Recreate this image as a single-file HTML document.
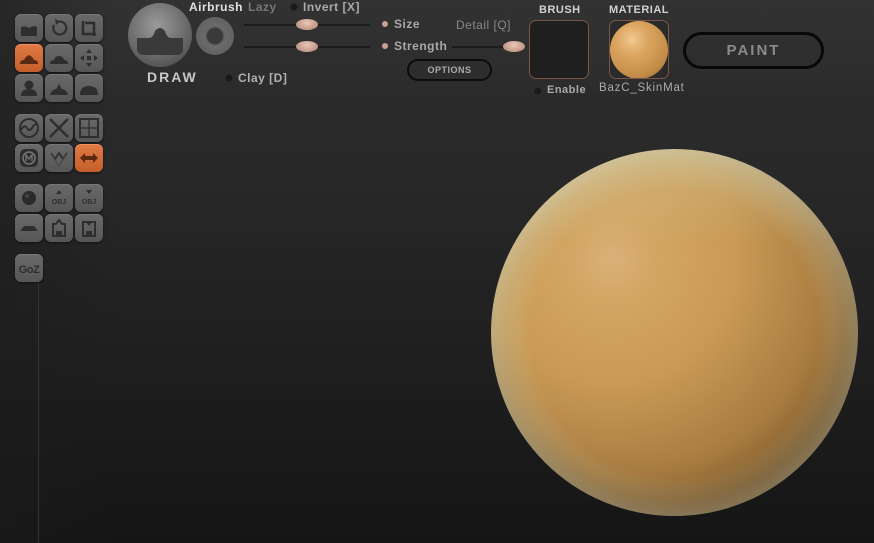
<!DOCTYPE html>
<html><head><meta charset="utf-8"><style>
*{margin:0;padding:0;box-sizing:border-box}
body{width:874px;height:543px;overflow:hidden;position:relative;font-family:"Liberation Sans","DejaVu Sans",sans-serif;
background:linear-gradient(180deg,#2d2d2d 0%,#292929 30%,#1f1f1f 65%,#151515 100%);}
.top{position:absolute;left:0;top:0;width:874px;height:96px;background:linear-gradient(180deg,#323232,#2d2d2d 80%,rgba(42,42,42,0));}
.left{position:absolute;left:0;top:0;width:118px;height:543px;background:linear-gradient(90deg,rgba(28,28,28,0.5),rgba(40,40,40,0));}
.vline{position:absolute;left:38px;top:282px;width:1px;height:261px;background:#333}
.b{position:absolute;width:28px;height:28px;border-radius:6px;background:linear-gradient(180deg,#6a6a6a,#565656);box-shadow:0 1px 2px #111, inset 0 1px 0 #777;}
.b.o{background:linear-gradient(180deg,#e07a45,#c45f2c);box-shadow:0 1px 2px #111, inset 0 1px 0 #f09060}
.b svg{position:absolute;left:0;top:0}
.t{position:absolute;color:#bdbdbd;font-size:12px;font-weight:bold;letter-spacing:0.5px;white-space:nowrap}
.dot{position:absolute;width:8px;height:8px;border-radius:50%;background:#1a1a1a;box-shadow:inset 0 0 1px #555}
.pd{position:absolute;width:6px;height:6px;border-radius:50%;background:#c8a090}
.knob{position:absolute;width:22px;height:11px;border-radius:50%;background:radial-gradient(ellipse at 50% 35%,#e8c8b8,#b08070)}
.line{position:absolute;height:2px;background:#1c1c1c}
</style></head><body>
<div class="top"></div>
<div class="left"></div>
<div class="vline"></div>

<div class="b" style="left:15px;top:14px"><svg width="28" height="28"><path d="M6 13 Q10 11 14 14 Q18 11 22 13 L22 22 L6 22Z" fill="#2e2e2e"/></svg></div>
<div class="b" style="left:45px;top:14px"><svg width="28" height="28"><path d="M9 11 A6.5 6.5 0 1 0 14 7.5" fill="none" stroke="#2e2e2e" stroke-width="2.2"/><path d="M10 5 L15 7.5 L11 11Z" fill="#2e2e2e"/></svg></div>
<div class="b" style="left:75px;top:14px"><svg width="28" height="28"><path d="M8 7 V20 H21 M10 9 H19 V22" fill="none" stroke="#2e2e2e" stroke-width="2.5"/></svg></div>
<div class="b o" style="left:15px;top:44px"><svg width="28" height="28"><path d="M5 20 Q5 16 9 16 Q11 12 14 11 Q17 12 19 16 Q23 16 23 20 Z" fill="#5a2a12"/></svg></div>
<div class="b" style="left:45px;top:44px"><svg width="28" height="28"><path d="M5 20 Q5 16 9 16 Q10 12 14 12 Q18 12 19 16 Q23 16 23 20 Z" fill="#2e2e2e"/></svg></div>
<div class="b" style="left:75px;top:44px"><svg width="28" height="28"><path d="M14 5 L17 9 H11Z M14 23 L17 19 H11Z M5 14 L9 11 V17Z M23 14 L19 11 V17Z" fill="#2e2e2e"/><rect x="12" y="12" width="4" height="4" fill="#2e2e2e"/></svg></div>
<div class="b" style="left:15px;top:74px"><svg width="28" height="28"><circle cx="14" cy="11" r="4.5" fill="#2e2e2e"/><path d="M6 22 Q6 15 14 15 Q22 15 22 22Z" fill="#2e2e2e"/></svg></div>
<div class="b" style="left:45px;top:74px"><svg width="28" height="28"><path d="M5 21 Q6 16 11 15 Q13 13 14 9 Q15 13 17 15 Q22 16 23 21Z" fill="#2e2e2e"/></svg></div>
<div class="b" style="left:75px;top:74px"><svg width="28" height="28"><path d="M5 21 Q5 12 14 12 Q23 12 23 21Z" fill="#2e2e2e"/></svg></div>

<div class="b" style="left:15px;top:114px"><svg width="28" height="28"><circle cx="14" cy="14" r="9" fill="none" stroke="#2e2e2e" stroke-width="2"/><path d="M6 16 Q9 10 12 14 Q15 19 18 12 L21 10" fill="none" stroke="#2e2e2e" stroke-width="2"/></svg></div>
<div class="b" style="left:45px;top:114px"><svg width="28" height="28"><path d="M5 5 L23 23 M23 5 L5 23" stroke="#2e2e2e" stroke-width="2.5"/></svg></div>
<div class="b" style="left:75px;top:114px"><svg width="28" height="28"><rect x="5" y="5" width="18" height="18" fill="none" stroke="#2e2e2e" stroke-width="2"/><path d="M14 5V23M5 14H23" stroke="#2e2e2e" stroke-width="1.3"/></svg></div>
<div class="b" style="left:15px;top:144px"><svg width="28" height="28"><rect x="5" y="5" width="18" height="18" rx="5" fill="#2e2e2e"/><circle cx="14" cy="14" r="6" fill="none" stroke="#777" stroke-width="1.5"/><path d="M11 17 V11 L14 15 L17 11 V17" fill="none" stroke="#777" stroke-width="1.3"/></svg></div>
<div class="b" style="left:45px;top:144px"><svg width="28" height="28"><path d="M6 9 L10 15 L14 9 L18 15 L22 9" fill="none" stroke="#2e2e2e" stroke-width="1.8"/><path d="M6 9 L14 22 L22 9" fill="none" stroke="#444" stroke-width="1"/></svg></div>
<div class="b o" style="left:75px;top:144px"><svg width="28" height="28"><path d="M5 14 L10 9 V12 H18 V9 L23 14 L18 19 V16 H10 V19Z" fill="#5a2a12"/></svg></div>

<div class="b" style="left:15px;top:184px"><svg width="28" height="28"><circle cx="14" cy="14" r="7" fill="#2a2a2a"/><circle cx="12" cy="12" r="2" fill="#444"/></svg></div>
<div class="b" style="left:45px;top:184px"><svg width="28" height="28"><path d="M14 6 L17 10 H11Z" fill="#2e2e2e"/><text x="14" y="20" font-size="7" text-anchor="middle" fill="#2e2e2e" font-family="Liberation Sans" font-weight="bold">OBJ</text></svg></div>
<div class="b" style="left:75px;top:184px"><svg width="28" height="28"><path d="M14 10 L17 6 H11Z" fill="#2e2e2e"/><text x="14" y="20" font-size="7" text-anchor="middle" fill="#2e2e2e" font-family="Liberation Sans" font-weight="bold">OBJ</text></svg></div>
<div class="b" style="left:15px;top:214px"><svg width="28" height="28"><path d="M5 17 L9 12 H19 L23 17Z" fill="#2e2e2e"/></svg></div>
<div class="b" style="left:45px;top:214px"><svg width="28" height="28"><path d="M8 10 V22 H20 V10 H17 L14 6 L11 10Z" fill="none" stroke="#2e2e2e" stroke-width="2"/><rect x="11" y="17" width="6" height="5" fill="#2e2e2e"/></svg></div>
<div class="b" style="left:75px;top:214px"><svg width="28" height="28"><path d="M8 8 V22 H20 V8 Z" fill="none" stroke="#2e2e2e" stroke-width="2"/><path d="M11 8 H17 L14 12Z" fill="#2e2e2e"/><rect x="11" y="17" width="6" height="5" fill="#2e2e2e"/></svg></div>
<div class="b" style="left:15px;top:254px"><svg width="28" height="28"><text x="14" y="19" font-size="11" text-anchor="middle" fill="#2e2e2e" font-family="Liberation Sans" font-weight="bold" letter-spacing="-0.5">GoZ</text></svg></div>

<div style="position:absolute;left:128px;top:3px;width:64px;height:64px;border-radius:50%;background:radial-gradient(circle at 45% 35%,#9a9a9a,#6a6a6a 55%,#3c3c3c 100%);"></div>
<svg style="position:absolute;left:128px;top:3px" width="64" height="64"><path d="M9 35 H21 Q25 35 27 28 Q32 22 37 28 Q39 35 43 35 H55 V45 Q55 52 48 52 H16 Q9 52 9 45Z" fill="#3a3a3a"/></svg>
<div style="position:absolute;left:196px;top:17px;width:38px;height:38px;border-radius:50%;background:radial-gradient(circle,#747474,#5a5a5a);"></div>
<div style="position:absolute;left:207px;top:28px;width:16px;height:16px;border-radius:50%;background:#3a3a3a;box-shadow:0 0 2px #222"></div>
<div class="t" style="left:147px;top:69px;font-size:14px;letter-spacing:2px;color:#c8c8c8">DRAW</div>

<div class="t" style="left:189px;top:0px;color:#e0e0e0;font-size:12px">Airbrush</div>
<div class="t" style="left:248px;top:0px;color:#777">Lazy</div>
<div class="dot" style="left:290px;top:3px"></div>
<div class="t" style="left:303px;top:0px;color:#aaa">Invert [X]</div>
<div class="dot" style="left:225px;top:74px"></div>
<div class="t" style="left:238px;top:71px;color:#b0b0b0">Clay [D]</div>

<div class="line" style="left:244px;top:24px;width:126px"></div>
<div class="knob" style="left:296px;top:19px"></div>
<div class="line" style="left:244px;top:46px;width:126px"></div>
<div class="knob" style="left:296px;top:41px"></div>
<div class="pd" style="left:382px;top:21px"></div>
<div class="t" style="left:394px;top:17px;color:#a8a8a8">Size</div>
<div class="pd" style="left:382px;top:43px"></div>
<div class="t" style="left:394px;top:39px;color:#a8a8a8">Strength</div>
<div class="t" style="left:456px;top:18px;color:#888;font-weight:normal">Detail [Q]</div>
<div class="line" style="left:452px;top:46px;width:70px"></div>
<div class="knob" style="left:503px;top:41px"></div>
<div style="position:absolute;left:407px;top:59px;width:85px;height:22px;border:2px solid #0c0c0c;border-radius:11px;color:#aaa;font-size:9px;font-weight:bold;text-align:center;line-height:18px;letter-spacing:0.5px">OPTIONS</div>

<div class="t" style="left:539px;top:4px;font-size:11px;color:#d0d0d0">BRUSH</div>
<div style="position:absolute;left:529px;top:20px;width:60px;height:59px;border:1px solid #7a5545;border-radius:7px;background:#1f1f1f"></div>
<div class="dot" style="left:534px;top:87px"></div>
<div class="t" style="left:547px;top:84px;font-size:11px;color:#aaa">Enable</div>

<div class="t" style="left:609px;top:4px;font-size:11px;color:#d0d0d0">MATERIAL</div>
<div style="position:absolute;left:609px;top:20px;width:60px;height:59px;border:1px solid #7a5545;border-radius:7px;background:#2a2a2a;overflow:hidden">
<div style="position:absolute;left:0px;top:0px;width:58px;height:58px;border-radius:50%;background:radial-gradient(circle at 38% 32%,#f0c890,#dca560 30%,#c28c48 70%,#7a5526 100%)"></div></div>
<div class="t" style="left:599px;top:82px;font-size:11.5px;color:#aaa;font-weight:normal;letter-spacing:0.8px">BazC_SkinMat</div>

<div style="position:absolute;left:683px;top:32px;width:141px;height:37px;border:3px solid #080808;border-radius:19px;color:#8a8a8a;font-size:15px;font-weight:bold;text-align:center;line-height:31px;letter-spacing:2px">PAINT</div>

<div style="position:absolute;left:491px;top:149px;width:367px;height:367px;border-radius:50%;
background:
radial-gradient(closest-side circle at 50% 50%,rgba(200,200,160,0) 78%,rgba(205,205,170,0.3) 92%,rgba(215,215,185,0.55) 100%),
linear-gradient(180deg,rgba(215,210,170,0.35) 0%,rgba(215,210,170,0) 25%),
radial-gradient(circle at 33% 30%,#dcb07a 0%,#d3a663 12%,#c99a55 35%,#a87b40 62%,#7a5528 85%,#4a3014 100%);
box-shadow:inset -10px -20px 30px rgba(40,25,10,0.35);"></div>
</body></html>
